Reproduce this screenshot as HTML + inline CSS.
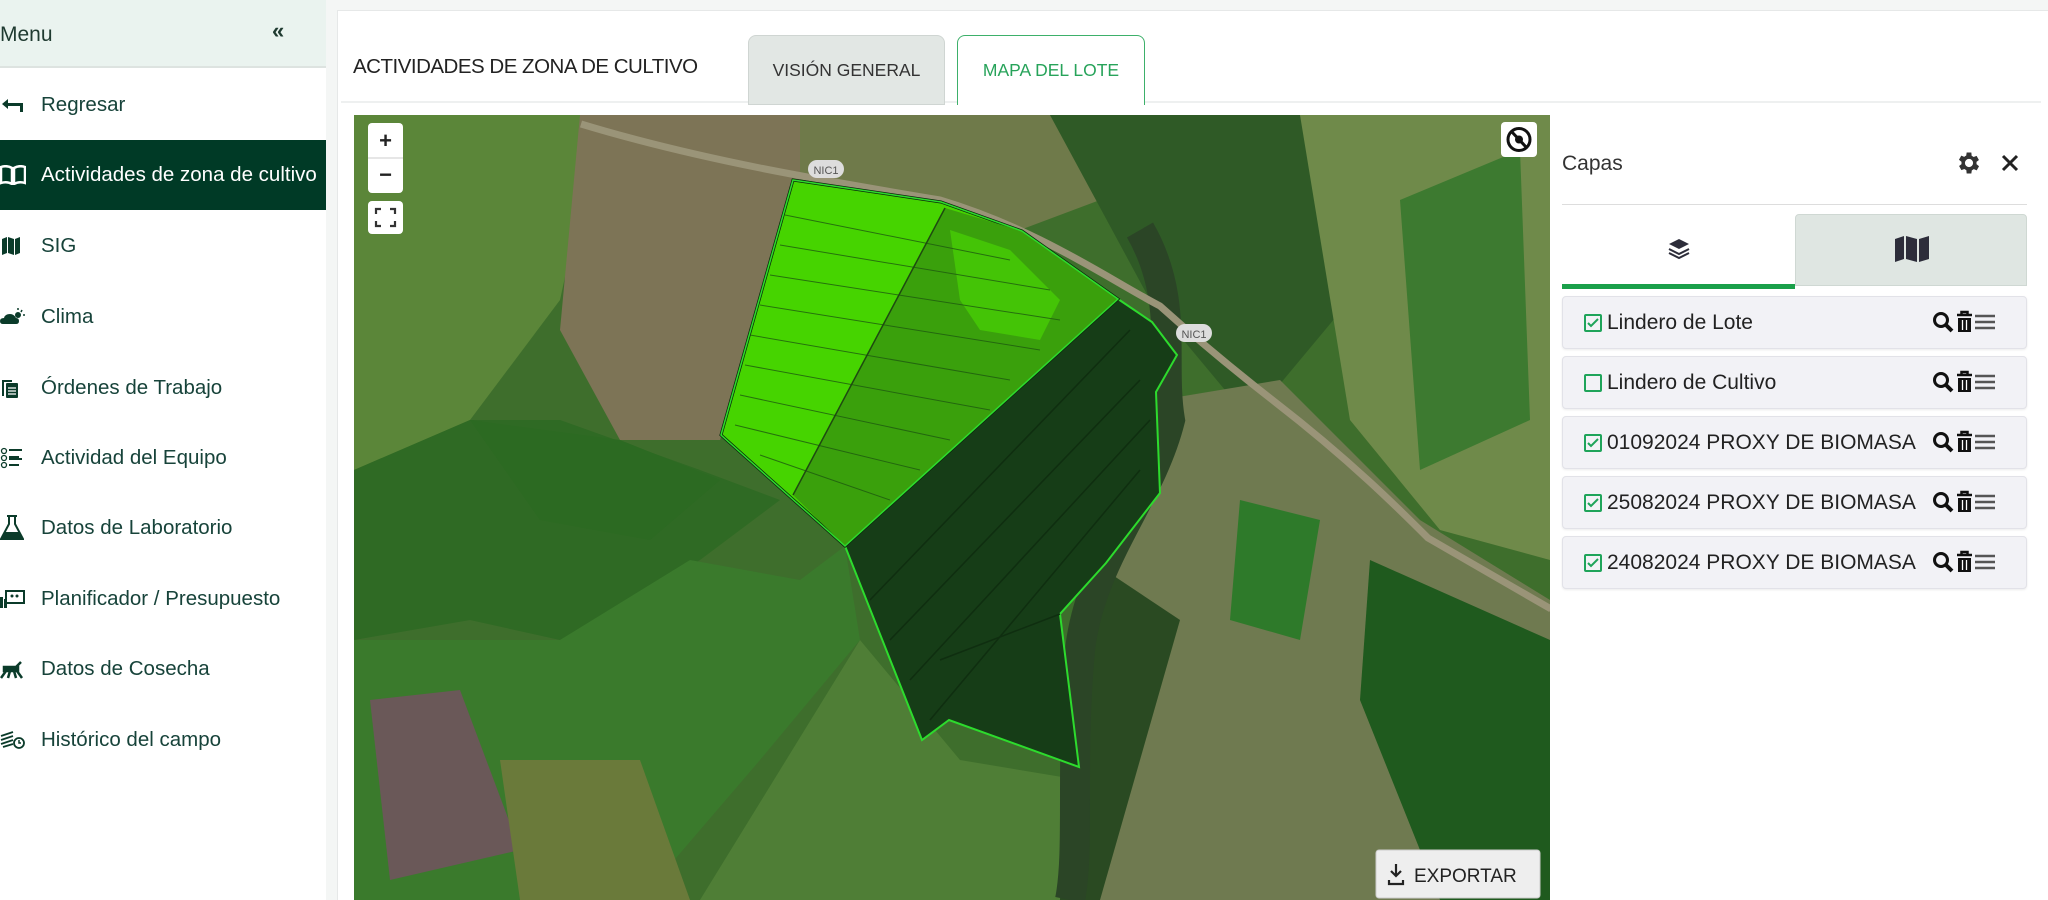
<!DOCTYPE html>
<html><head><meta charset="utf-8"><style>
*{box-sizing:border-box;margin:0;padding:0}
body{width:2048px;height:900px;overflow:hidden;background:#f4f6f5;font-family:"Liberation Sans",sans-serif;position:relative}
.abs{position:absolute}
#side{left:0;top:0;width:326px;height:900px;background:#fff}
#sh{left:0;top:0;width:326px;height:68px;background:#eaf3ef;border-bottom:2px solid #dde3e0}
.item{position:absolute;left:0;width:326px;height:70px;display:flex;align-items:center;font-size:20.5px;color:#17433a}
.item .ic{width:41px;padding-left:0;display:flex;align-items:center}
.item.act{background:#003a26;color:#fff}
#card{left:337px;top:10px;width:1711px;height:890px;background:#fff;border-left:1px solid #e6e8e8;border-top:1px solid #e6e8e8}
.tab{position:absolute;top:35px;height:70px;border-radius:8px 8px 0 0;display:flex;align-items:center;justify-content:center;font-size:17.5px}
.row{position:absolute;left:1562px;width:465px;height:53px;background:#f2f2f6;border:1px solid #e2e2e8;border-radius:4px;box-shadow:0 1px 2px rgba(0,0,0,.08);display:flex;align-items:center;font-size:21px;color:#222}
.cb{width:18px;height:18px;border:2px solid #1fa45a;margin-left:21px;margin-right:5px;border-radius:2px;display:flex;align-items:center;justify-content:center}
</style></head><body>
<div id="side" class="abs">
 <div id="sh" class="abs"><span class="abs" style="left:0;top:23px;font-size:21px;color:#1f3a30">Menu</span><span class="abs" style="left:272px;top:18px;font-size:22px;color:#1f3a30;font-weight:bold">«</span></div>
 <div class="item" style="top:70px"><span class="ic"><svg width="24" height="16" viewBox="0 0 24 16"><path d="M8 2L2 7l6 5V9h12v6h3V6H8z" fill="#0b3b2a"/></svg></span>Regresar</div>
 <div class="item act" style="top:140px"><span class="ic"><svg width="26" height="20" viewBox="0 0 26 20"><path d="M1 2q6-2 11 1v16q-5-3-11-1zM14 3q5-3 11-1v16q-6-2-11 1z" fill="none" stroke="#fff" stroke-width="2.5"/></svg></span>Actividades de zona de cultivo</div>
 <div class="item" style="top:211px"><span class="ic"><svg width="22" height="20" viewBox="0 0 22 20"><path d="M2 3l5-2v16l-5 2zM8 1l6 2v16l-6-2zM15 3l5-2v16l-5 2z" fill="#0b3b2a"/></svg></span>SIG</div>
 <div class="item" style="top:282px"><span class="ic"><svg width="26" height="20" viewBox="0 0 26 20"><path d="M3 17q-3 0-3-3t4-3q1-4 6-4 4 0 6 4 3 0 3 3t-3 3z" fill="#0b3b2a"/><circle cx="18" cy="8" r="3" fill="#0b3b2a"/><path d="M18 1v2M23 8h2M22 3l-1 2" stroke="#0b3b2a" stroke-width="1.5"/></svg></span>Clima</div>
 <div class="item" style="top:353px"><span class="ic"><svg width="20" height="22" viewBox="0 0 20 22"><path d="M2 3h10v2H4v14H2z" fill="#0b3b2a"/><rect x="6" y="6" width="12" height="15" rx="1" fill="#0b3b2a"/><path d="M8 11h8M8 14h8M8 17h8" stroke="#fff" stroke-width="1.3"/></svg></span>Órdenes de Trabajo</div>
 <div class="item" style="top:423px"><span class="ic"><svg width="24" height="22" viewBox="0 0 24 22"><g fill="none" stroke="#0b3b2a" stroke-width="1.3"><circle cx="4" cy="4" r="2.5"/><circle cx="4" cy="11" r="2.5"/><circle cx="4" cy="18" r="2.5"/></g><path d="M9 3h13M9 10h10M9 12h13M9 18h10" stroke="#0b3b2a" stroke-width="2"/></svg></span>Actividad del Equipo</div>
 <div class="item" style="top:493px"><span class="ic"><svg width="24" height="26" viewBox="0 0 24 26"><path d="M7 1h10M9 1v8L1 24h22L15 9V1" fill="none" stroke="#0b3b2a" stroke-width="2"/><path d="M4 17h16l3 7H1z" fill="#0b3b2a"/></svg></span>Datos de Laboratorio</div>
 <div class="item" style="top:564px"><span class="ic"><svg width="26" height="20" viewBox="0 0 26 20"><rect x="6" y="2" width="18" height="12" fill="none" stroke="#0b3b2a" stroke-width="2"/><rect x="0" y="8" width="3" height="11" fill="#0b3b2a"/><rect x="4" y="10" width="3" height="9" fill="#0b3b2a"/><circle cx="12" cy="7" r="1.5" fill="#0b3b2a"/><circle cx="17" cy="7" r="1.5" fill="#0b3b2a"/></svg></span>Planificador / Presupuesto</div>
 <div class="item" style="top:634px"><span class="ic"><svg width="24" height="20" viewBox="0 0 24 20"><path d="M4 8h14v4H4zM6 12l-5 7M10 12l-2 7M14 12l2 7M17 12l5 7M16 8l5-5" stroke="#0b3b2a" stroke-width="2.5" fill="#0b3b2a"/></svg></span>Datos de Cosecha</div>
 <div class="item" style="top:705px"><span class="ic"><svg width="26" height="20" viewBox="0 0 26 20"><path d="M1 6l12-4M1 10l12-4M1 14l12-4M3 17l10-3" stroke="#0b3b2a" stroke-width="1.8"/><circle cx="19" cy="13" r="5" fill="none" stroke="#0b3b2a" stroke-width="1.8"/><path d="M19 10v3h2" stroke="#0b3b2a" stroke-width="1.5" fill="none"/></svg></span>Histórico del campo</div>
</div>
<div id="card" class="abs"></div>
<div class="abs" style="left:353px;top:55px;font-size:20.5px;color:#222;letter-spacing:-0.5px">ACTIVIDADES DE ZONA DE CULTIVO</div>
<div class="abs" style="left:341px;top:101px;width:1700px;height:2px;background:#eef0f0"></div>
<div class="tab" style="left:748px;width:197px;background:#e2e7e4;border:1px solid #cfd5d2;color:#333">VISIÓN GENERAL</div>
<div class="tab" style="left:957px;width:188px;background:#fff;border:1px solid #3db06a;border-bottom:none;color:#27a35a">MAPA DEL LOTE</div>

<svg class="abs" style="left:354px;top:115px" width="1196" height="785" viewBox="354 115 1196 785">
 <rect x="354" y="115" width="1196" height="785" fill="#3e6e2c"/>
 <polygon points="354,115 600,115 560,300 470,420 354,470" fill="#5b8639"/>
 <polygon points="580,115 800,115 800,180 720,440 620,440 560,330" fill="#7d7456"/>
 <polygon points="800,115 1050,115 1100,200 1020,230 940,200 800,175" fill="#6f7a4a"/>
 <polygon points="1050,115 1300,115 1350,300 1250,420 1150,300" fill="#2f5a26"/>
 <polygon points="1300,115 1550,115 1550,560 1440,530 1350,420" fill="#6f8a4a"/>
 <polygon points="1400,200 1520,150 1530,420 1420,470" fill="#3d7a30"/>
 <polygon points="354,470 470,420 560,420 700,470 780,500 700,560 560,640 470,620 354,640" fill="#2f6a24"/>
 <polygon points="470,420 620,440 720,480 650,540 540,520" fill="#2c6a22"/>
 <polygon points="354,640 560,640 690,560 800,580 845,546 860,640 760,760 640,900 354,900" fill="#3a7a2c"/>
 <polygon points="370,700 460,690 520,850 390,880" fill="#6a5858"/>
 <polygon points="500,760 640,760 690,900 520,900" fill="#6a7a3a"/>
 <polygon points="860,640 960,760 1080,780 1060,900 700,900" fill="#4f7e36"/>
 <polygon points="1160,400 1280,380 1420,520 1550,600 1550,900 1100,900 1100,620" fill="#6f7a50"/>
 <polygon points="1370,560 1550,640 1550,900 1440,900 1360,700" fill="#1f5a1e"/>
 <polygon points="1240,500 1320,520 1300,640 1230,620" fill="#2e7a2a"/>
 <polygon points="1090,560 1180,620 1100,900 1060,900 1070,700" fill="#2a4a22"/>
 <path d="M1140,230 C1180,300 1160,360 1170,420 C1150,500 1090,560 1080,650 C1070,760 1080,850 1070,900" stroke="#2b4526" stroke-width="30" fill="none"/>
 <polygon points="1118,299 1152,322 1177,355 1156,392 1160,493 1106,563 1060,614 1079,767 949,720 922,740 845,546" fill="#163d17" stroke="#2ddb2d" stroke-width="2"/>
 <g stroke="#0f2e10" stroke-width="1.5"><path d="M870,600 L1130,330M890,640 L1140,380M910,680 L1150,420M930,720 L1140,470M940,660 L1060,614"/></g>
 <path d="M581,124 C700,160 820,180 940,200 C1040,230 1110,280 1160,306 C1220,360 1260,390 1275,402 C1350,460 1400,510 1428,538 L1551,609" stroke="#9a9478" stroke-width="7" fill="none"/>
 <polygon points="793,180 941,202 1022,231 1118,299 845,546 721,435" fill="#46d400" stroke="#0a2a0a" stroke-width="3"/>
 <polygon points="945,208 1022,231 1118,299 845,546 793,495" fill="#3aa00c"/>
 <polygon points="950,230 1010,250 1060,300 1040,340 980,330 960,300" fill="#44c406"/>
 <polygon points="820,470 870,430 890,460 850,510" fill="#3aa00c"/>
 <g stroke="#1e5a10" stroke-width="1" opacity=".8"><path d="M785,215 L1010,260M780,245 L1050,290M770,275 L1060,320M760,305 L1040,350M750,335 L1010,380M745,365 L990,410M740,395 L950,440M735,425 L920,470M760,455 L890,500"/></g>
 <line x1="945" y1="208" x2="793" y2="495" stroke="#1e4a10" stroke-width="1.5"/>
 <polygon points="793,180 941,202 1022,231 1118,299 845,546 721,435" fill="none" stroke="#2ddb2d" stroke-width="1.5"/>
 <rect x="808" y="160" width="36" height="18" rx="9" fill="#ddd"/><text x="826" y="174" font-size="11" text-anchor="middle" fill="#555" font-family="Liberation Sans">NIC1</text>
 <rect x="1176" y="324" width="36" height="18" rx="9" fill="#ddd"/><text x="1194" y="338" font-size="11" text-anchor="middle" fill="#555" font-family="Liberation Sans">NIC1</text>
 <rect x="368" y="123" width="35" height="70" rx="4" fill="#fff"/><line x1="368" y1="158" x2="403" y2="158" stroke="#ccc"/>
 <text x="385.5" y="148" font-size="22" text-anchor="middle" font-weight="bold" fill="#222" font-family="Liberation Sans">+</text>
 <text x="385.5" y="182" font-size="22" text-anchor="middle" font-weight="bold" fill="#222" font-family="Liberation Sans">−</text>
 <rect x="368" y="201" width="35" height="33" rx="4" fill="#fff"/>
 <path d="M376,214v-5h5M390,209h5v5M395,221v5h-5M381,226h-5v-5" stroke="#333" stroke-width="2.2" fill="none"/>
 <rect x="1501" y="122" width="36" height="35" rx="4" fill="#fff"/>
 <circle cx="1519" cy="139.5" r="11" stroke="#111" stroke-width="3" fill="none"/><circle cx="1519" cy="139.5" r="4" fill="#111"/><line x1="1511" y1="131" x2="1527" y2="148" stroke="#111" stroke-width="3"/>
 <rect x="1376" y="850" width="164" height="48" rx="3" fill="#eeeeee" stroke="#ccc"/>
 <path d="M1396,864v12M1391,871l5,5 5-5M1389,880v4h14v-4" stroke="#222" stroke-width="2.2" fill="none"/>
 <text x="1414" y="882" font-size="19" fill="#222" font-family="Liberation Sans">EXPORTAR</text>
</svg>

<div class="abs" style="left:1562px;top:152px;font-size:21px;color:#333">Capas</div>
<svg class="abs" style="left:1955px;top:149px" width="28" height="28" viewBox="0 0 24 24"><path fill="#333" d="M19.4 13a7.5 7.5 0 000-2l2.1-1.6-2-3.5-2.5 1a7 7 0 00-1.7-1L15 3h-4l-.4 2.7a7 7 0 00-1.7 1l-2.5-1-2 3.5L6.6 11a7.5 7.5 0 000 2l-2.1 1.6 2 3.5 2.5-1a7 7 0 001.7 1L11 21h4l.4-2.7a7 7 0 001.7-1l2.5 1 2-3.5zM13 15.5a3.5 3.5 0 110-7 3.5 3.5 0 010 7z" transform="translate(-1 0)"/></svg>
<svg class="abs" style="left:2000px;top:153px" width="20" height="20" viewBox="0 0 20 20"><path d="M3 3l14 14M17 3L3 17" stroke="#222" stroke-width="3"/></svg>
<div class="abs" style="left:1562px;top:204px;width:465px;height:1px;background:#ddd"></div>
<div class="abs" style="left:1562px;top:284px;width:233px;height:5px;background:#1aa04a"></div>
<svg class="abs" style="left:1667px;top:237px" width="24" height="24" viewBox="0 0 24 24"><path d="M12 2l10 5-10 5L2 7z" fill="#2d2d3a"/><path d="M2 12l10 5 10-5M2 16l10 5 10-5" stroke="#2d2d3a" stroke-width="2" fill="none"/></svg>
<div class="abs" style="left:1795px;top:214px;width:232px;height:72px;background:#dfe6e2;border:1px solid #cfd8d3;border-radius:4px 4px 0 0"></div>
<svg class="abs" style="left:1894px;top:235px" width="36" height="28" viewBox="0 0 36 28"><path d="M1 4l9-3v23l-9 3zM12 1l11 3v23l-11-3zM25 4l10-3v23l-10 3z" fill="#2d2d3a"/></svg>

<div class="row" style="top:296px"><span class="cb"><svg width="12" height="10"><path d="M1 5l3 3 7-7" stroke="#1fa45a" stroke-width="2" fill="none"/></svg></span>Lindero de Lote</div>
<div class="row" style="top:356px"><span class="cb"></span>Lindero de Cultivo</div>
<div class="row" style="top:416px"><span class="cb"><svg width="12" height="10"><path d="M1 5l3 3 7-7" stroke="#1fa45a" stroke-width="2" fill="none"/></svg></span>01092024 PROXY DE BIOMASA</div>
<div class="row" style="top:476px"><span class="cb"><svg width="12" height="10"><path d="M1 5l3 3 7-7" stroke="#1fa45a" stroke-width="2" fill="none"/></svg></span>25082024 PROXY DE BIOMASA</div>
<div class="row" style="top:536px"><span class="cb"><svg width="12" height="10"><path d="M1 5l3 3 7-7" stroke="#1fa45a" stroke-width="2" fill="none"/></svg></span>24082024 PROXY DE BIOMASA</div>
<svg class="abs" style="left:1932px;top:310px" width="70" height="280" viewBox="0 0 70 280">
 <defs><g id="ics">
  <circle cx="9" cy="10" r="6.5" stroke="#111" stroke-width="3" fill="none"/><path d="M13.5 14.5l6.5 6.5" stroke="#111" stroke-width="4"/>
  <path d="M25 5h15M29.5 5V2h6v3" stroke="#111" stroke-width="2.5" fill="none"/><rect x="26" y="8" width="13" height="14" fill="#111"/><path d="M30.5 10v10M34.5 10v10" stroke="#fff" stroke-width="1.3"/>
  <path d="M43 6h20M43 12h20M43 18h20" stroke="#555" stroke-width="2.5"/>
 </g></defs>
 <use href="#ics" y="0"/><use href="#ics" y="60"/><use href="#ics" y="120"/><use href="#ics" y="180"/><use href="#ics" y="240"/>
</svg>
</body></html>
